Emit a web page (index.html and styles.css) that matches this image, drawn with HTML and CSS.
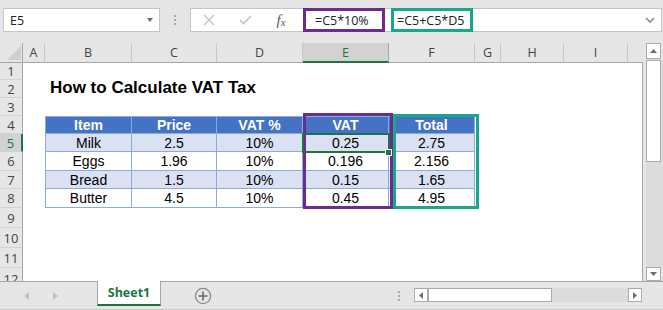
FILE: index.html
```html
<!DOCTYPE html>
<html lang="en">
<head>
  <meta charset="UTF-8" />
  <title>How to Calculate VAT Tax</title>
  <link rel="stylesheet" href="styles.css">
</head>
<body>
  <div class="formula-bar">
    <div class="name-box">
      <span>E5</span>
      <span class="caret"></span>
    </div>
    <div class="grip"><i></i><i></i><i></i></div>
    <div class="formula-box">
      <span class="fb-icon">
        <svg width="12" height="12" viewBox="0 0 12 12"><path d="M1 1 L11 11 M11 1 L1 11" stroke="#c4c4c4" stroke-width="1.3" fill="none"/></svg>
      </span>
      <span class="fb-icon">
        <svg width="13" height="10" viewBox="0 0 13 10"><path d="M1 5 L4.5 8.5 L12 1" stroke="#c4c4c4" stroke-width="1.6" fill="none"/></svg>
      </span>
      <span class="fb-icon fx">f<small>x</small></span>
      <span class="formula vat-formula">=C5*10%</span>
      <span class="formula total-formula">=C5+C5*D5</span>
      <span class="expand">
        <svg width="10" height="6" viewBox="0 0 10 6"><path d="M1 1 L5 5 L9 1" stroke="#8a8a8a" stroke-width="1.6" fill="none"/></svg>
      </span>
    </div>
  </div>

  <div class="workspace">
    <div class="grid" id="grid">
      <div class="box-vat"></div>
      <div class="box-total"></div>
      <div class="active-cell"></div>
      <div class="fill-handle"></div>
    </div>
    <div class="vscroll">
      <div class="sbtn">
        <svg width="7" height="4" viewBox="0 0 7 4"><path d="M0 4 L3.5 0 L7 4 Z" fill="#6d6d6d"/></svg>
      </div>
      <div class="vtrack">
        <div class="vthumb"></div>
      </div>
      <div class="sbtn down">
        <svg width="7" height="4" viewBox="0 0 7 4"><path d="M0 0 L3.5 4 L7 0 Z" fill="#6d6d6d"/></svg>
      </div>
    </div>
  </div>

  <div class="tabbar">
    <div class="tab-nav">
      <svg width="5" height="8" viewBox="0 0 5 8"><path d="M5 0 L0 4 L5 8 Z" fill="#c2c2c2"/></svg>
      <svg width="5" height="8" viewBox="0 0 5 8"><path d="M0 0 L5 4 L0 8 Z" fill="#c2c2c2"/></svg>
    </div>
    <div class="sheet-tab">Sheet1</div>
    <div class="add-sheet">
      <svg width="18" height="18" viewBox="0 0 18 18">
        <circle cx="9" cy="9" r="7.6" stroke="#8a8a8a" stroke-width="1.3" fill="none"/>
        <path d="M9 4.5 V13.5 M4.5 9 H13.5" stroke="#6a6a6a" stroke-width="1.6"/>
      </svg>
    </div>
    <div class="hdots"><i></i><i></i><i></i></div>
    <div class="hscroll">
      <div class="hbtn">
        <svg width="4" height="7" viewBox="0 0 4 7"><path d="M4 0 L0 3.5 L4 7 Z" fill="#6d6d6d"/></svg>
      </div>
      <div class="hthumb"></div>
      <div class="htrack"></div>
      <div class="hbtn">
        <svg width="4" height="7" viewBox="0 0 4 7"><path d="M0 0 L4 3.5 L0 7 Z" fill="#6d6d6d"/></svg>
      </div>
    </div>
  </div>

  <script>
    const grid = document.getElementById("grid");
    const letters = ["", "A", "B", "C", "D", "E", "F", "G", "H", "I", ""];

    const table = {
      4: ["Item", "Price", "VAT %", "VAT", "Total"],
      5: ["Milk", "2.5", "10%", "0.25", "2.75"],
      6: ["Eggs", "1.96", "10%", "0.196", "2.156"],
      7: ["Bread", "1.5", "10%", "0.15", "1.65"],
      8: ["Butter", "4.5", "10%", "0.45", "4.95"]
    };

    // column headers
    letters.forEach((letter, i) => {
      const head = document.createElement("div");
      if (i === 0) {
        head.className = "corner";
        head.innerHTML = '<span class="corner-mark"></span>';
      } else {
        head.className = "col-head";
        head.textContent = letter;
        if (letter === "E") head.classList.add("sel");
        if (i === letters.length - 1) head.classList.add("last");
      }
      grid.appendChild(head);
    });

    for (let r = 1; r <= 12; r++) {
      const rowHead = document.createElement("div");
      rowHead.className = "row-head";
      rowHead.textContent = r;
      if (r === 5) rowHead.classList.add("sel");
      if (r === 12) rowHead.classList.add("cut");
      grid.appendChild(rowHead);

      for (let c = 1; c < letters.length; c++) {
        const cell = document.createElement("div");
        cell.className = "cell";

        if (r === 2 && c === 2) {
          cell.classList.add("title");
          cell.textContent = "How to Calculate VAT Tax";
        }

        // table sits in B4:F8
        if (table[r] && c >= 2 && c <= 6) {
          cell.textContent = table[r][c - 2];
          cell.classList.add("tcell");
          if (c === 2) cell.classList.add("first");
          if (r === 4) cell.classList.add("head");
          else if (r % 2 === 1) cell.classList.add("band");
        }

        if (c === letters.length - 1) cell.classList.add("edge");
        grid.appendChild(cell);
      }
    }
  </script>
</body>
</html>
```

FILE: styles.css
```css
body {
  margin: 0;
  width: 663px;
  height: 310px;
  overflow: hidden;
  background: #e6e6e6;
  font-family: "Open Sans", sans-serif;
  color: #333;
}

/* Formula bar */
.formula-bar {
  display: flex;
  align-items: flex-start;
  height: 43px;
  padding: 8px 1px 0 3px;
  box-sizing: border-box;
}

.name-box {
  width: 157px;
  height: 24px;
  box-sizing: border-box;
  background: #fff;
  border: 1px solid #c6c6c6;
  display: flex;
  align-items: center;
  justify-content: space-between;
  padding: 0 6px;
  font-size: 12.5px;
  color: #222;
}

.caret {
  width: 0;
  height: 0;
  border-left: 3.5px solid transparent;
  border-right: 3.5px solid transparent;
  border-top: 4px solid #6a6a6a;
}

.grip {
  width: 30px;
  height: 24px;
  display: flex;
  flex-direction: column;
  align-items: center;
  justify-content: center;
  gap: 2px;
}
.grip i, .hdots i {
  display: block;
  width: 2px;
  height: 2px;
  background: #a8a8a8;
}

.formula-box {
  flex: 1;
  height: 24px;
  box-sizing: border-box;
  background: #fff;
  border: 1px solid #c6c6c6;
  display: flex;
  align-items: stretch;
}

.fb-icon {
  width: 36px;
  display: flex;
  align-items: center;
  justify-content: center;
}
.fb-icon.fx {
  font-family: "Liberation Serif", serif;
  font-style: italic;
  font-size: 15px;
  color: #5a5a5a;
}
.fb-icon.fx small {
  font-size: 11px;
  margin-top: 4px;
}

.formula {
  margin: -1px 0;
  box-sizing: border-box;
  width: 82px;
  display: flex;
  align-items: center;
  font-size: 12.5px;
  color: #222;
  white-space: nowrap;
}
.vat-formula {
  margin-left: 4px;
  border: 3px solid #6c2c8f;
  padding-left: 9px;
}
.total-formula {
  margin-left: 6px;
  border: 3px solid #17a88c;
  padding-left: 3px;
}

.expand {
  margin-left: auto;
  width: 22px;
  display: flex;
  align-items: center;
  justify-content: center;
}

/* Sheet area */
.workspace {
  display: flex;
  height: 238px;
}

.grid {
  position: relative;
  width: 643px;
  background: #fff;
  display: grid;
  grid-template-columns: 23px 22px 87px 85px 86px 86px 86px 26px 63px 64px 15px;
  grid-template-rows: 20px 17px 18px 18px 18px 18px 19px 18px 19px 20px 20px 20px 13px;
  overflow: hidden;
}

.corner {
  background: #e6e6e6;
  border-right: 1px solid #a6a6a6;
  border-bottom: 1px solid #a6a6a6;
  display: flex;
  align-items: flex-end;
  justify-content: flex-end;
  padding: 0 1px 2px 0;
}
.corner-mark {
  width: 0;
  height: 0;
  border-left: 14px solid transparent;
  border-bottom: 14px solid #cfcfcf;
}

.col-head {
  background: #e6e6e6;
  border-right: 1px solid #c8c8c8;
  border-bottom: 1px solid #a6a6a6;
  display: flex;
  align-items: center;
  justify-content: center;
  font-size: 12.5px;
  color: #444;
}
.col-head.last {
  border-right: none;
}
.col-head.sel {
  background: #d2d2d2;
  border-right-color: #a8a8a8;
  border-bottom: 2px solid #217346;
  color: #217346;
}

.row-head {
  background: #e6e6e6;
  border-right: 1px solid #a6a6a6;
  border-bottom: 1px solid #d2d2d2;
  display: flex;
  align-items: center;
  justify-content: center;
  font-size: 13px;
  color: #444;
  overflow: hidden;
}
.row-head.sel {
  background: #d2d2d2;
  border-right: 2px solid #217346;
  color: #217346;
}
.row-head.cut {
  align-items: flex-start;
  border-bottom: none;
  padding-top: 2px;
}

.cell {
  display: flex;
  align-items: center;
  justify-content: center;
  font-family: "Liberation Sans", sans-serif;
  font-size: 14px;
  color: #000;
  white-space: nowrap;
}
.cell.edge {
  border-right: 1px solid #a6a6a6;
}

.title {
  justify-content: flex-start;
  padding-left: 5px;
  padding-bottom: 2px;
  font-size: 17px;
  font-weight: bold;
}

.tcell {
  border-right: 1px solid #8ea9db;
  border-bottom: 1px solid #8ea9db;
}
.tcell.first {
  border-left: 1px solid #8ea9db;
}
.tcell.head {
  background: #4472c4;
  border-top: 1px solid #8ea9db;
  color: #fff;
  font-weight: bold;
}
.tcell.band {
  background: #d9e1f2;
}

/* Highlight boxes drawn over the table */
.box-vat {
  position: absolute;
  left: 303px;
  top: 70px;
  width: 90px;
  height: 96px;
  box-sizing: border-box;
  border: 3px solid #6c2c8f;
}
.box-total {
  position: absolute;
  left: 393px;
  top: 71px;
  width: 86px;
  height: 95px;
  box-sizing: border-box;
  border: 3px solid #17a88c;
}
.active-cell {
  position: absolute;
  left: 302px;
  top: 90px;
  width: 88px;
  height: 20px;
  box-sizing: border-box;
  border: 2px solid #217346;
}
.fill-handle {
  position: absolute;
  left: 386px;
  top: 107px;
  width: 5px;
  height: 5px;
  background: #217346;
  box-shadow: 0 0 0 1px #fff;
}

/* Vertical scrollbar */
.vscroll {
  width: 20px;
  padding-left: 3px;
  box-sizing: border-box;
  display: flex;
  flex-direction: column;
}
.sbtn {
  width: 15px;
  height: 16px;
  box-sizing: border-box;
  background: #fff;
  border: 1px solid #ababab;
  display: flex;
  align-items: center;
  justify-content: center;
}
.sbtn.down {
  height: 14px;
}
.vtrack {
  flex: 1;
  background: #dcdcdc;
  padding-top: 1px;
}
.vthumb {
  width: 15px;
  height: 102px;
  box-sizing: border-box;
  background: #fff;
  border: 1px solid #ababab;
}

/* Sheet tabs */
.tabbar {
  height: 29px;
  box-sizing: border-box;
  border-top: 1px solid #a6a6a6;
  border-bottom: 1px solid #c8c8c8;
  display: flex;
  align-items: flex-start;
}

.tab-nav {
  width: 97px;
  height: 27px;
  display: flex;
  align-items: center;
  gap: 24px;
  padding-left: 24px;
  box-sizing: border-box;
}

.sheet-tab {
  width: 64px;
  height: 25px;
  margin-top: -1px;
  box-sizing: border-box;
  background: #fff;
  border-left: 1px solid #a6a6a6;
  border-right: 1px solid #a6a6a6;
  border-bottom: 2px solid #217346;
  display: flex;
  align-items: center;
  justify-content: center;
  font-size: 12.5px;
  font-weight: bold;
  color: #217346;
}

.add-sheet {
  margin-left: 33px;
  height: 27px;
  display: flex;
  align-items: center;
}

.hdots {
  margin-left: auto;
  margin-right: 14px;
  height: 27px;
  display: flex;
  flex-direction: column;
  justify-content: center;
  gap: 2px;
}

.hscroll {
  display: flex;
  margin-top: 6px;
  margin-right: 21px;
  height: 14px;
}
.hbtn {
  width: 14px;
  box-sizing: border-box;
  background: #fff;
  border: 1px solid #ababab;
  display: flex;
  align-items: center;
  justify-content: center;
}
.hthumb {
  width: 124px;
  box-sizing: border-box;
  background: #fff;
  border: 1px solid #ababab;
}
.htrack {
  width: 76px;
  background: #dcdcdc;
}
```
